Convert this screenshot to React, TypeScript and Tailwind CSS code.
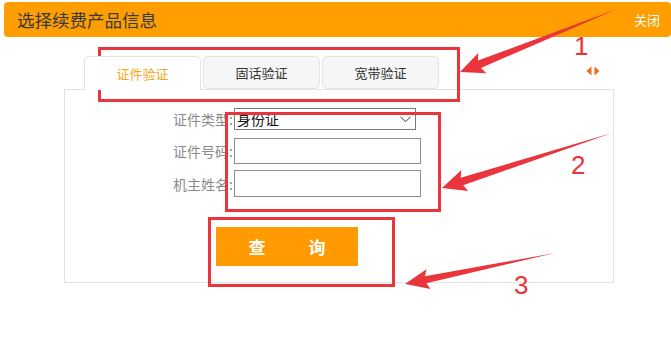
import React from "react";

type Pt = [number, number];

function arrowPoints(t: Pt, p: Pt, headLen: number, headHalf: number, shaftHalf: number): string {
  const dx = p[0] - t[0];
  const dy = p[1] - t[1];
  const L = Math.hypot(dx, dy);
  const ux = dx / L;
  const uy = dy / L;
  const nx = -uy;
  const ny = ux;
  const bx = p[0] - ux * headLen;
  const by = p[1] - uy * headLen;
  const pts: Pt[] = [
    t,
    [bx + nx * shaftHalf, by + ny * shaftHalf],
    [bx - ux * 3 + nx * headHalf, by - uy * 3 + ny * headHalf],
    p,
    [bx - ux * 3 - nx * headHalf, by - uy * 3 - ny * headHalf],
    [bx - nx * shaftHalf, by - ny * shaftHalf],
  ];
  return pts.map((q) => `${q[0].toFixed(1)},${q[1].toFixed(1)}`).join(" ");
}

const font = { fontFamily: '"Noto Sans CJK SC", "Noto Sans", sans-serif' };

export default function App() {
  const red = "#e9353b";
  return (
    <div className="relative w-[671px] h-[338px] overflow-hidden bg-white" style={font}>
      {/* header */}
      <div className="mt-[2px] ml-[4px] h-[35px] bg-[#ff9e00] rounded-[4px] flex items-center justify-between pl-[13px] pr-[11px]">
        <span className="text-[17.5px] text-[#3a3a3a] leading-none">选择续费产品信息</span>
        <span className="text-[13px] text-white leading-none">关闭</span>
      </div>

      {/* tabs row */}
      <div className="mt-[19px] ml-[84px] w-[530px] flex items-start">
        <div className="relative z-10 w-[117px] h-[34px] bg-white border border-b-0 border-[#e3e3e3] rounded-t-[5px] flex items-center justify-center text-[13px] text-[#f5a623]">
          证件验证
        </div>
        <div className="ml-[2px] w-[117px] h-[33px] bg-[#f6f6f6] border border-[#e3e3e3] rounded-[5px] flex items-center justify-center text-[13px] text-[#333]">
          固话验证
        </div>
        <div className="ml-[2px] w-[117px] h-[33px] bg-[#f6f6f6] border border-[#e3e3e3] rounded-[5px] flex items-center justify-center text-[13px] text-[#333]">
          宽带验证
        </div>
        <div className="ml-auto mr-[14px] mt-[10px]">
          <svg width="14" height="10" viewBox="0 0 14 10">
            <polygon points="5.5,0.5 0.5,5 5.5,9.5" fill="#ee6a1e" />
            <polygon points="8.5,0.5 13.5,5 8.5,9.5" fill="#ee6a1e" />
          </svg>
        </div>
      </div>

      {/* panel */}
      <div className="-mt-px ml-[64px] w-[550px] h-[194px] border border-[#e3e3e3] pt-[18px]">
        <div className="flex items-center h-[22px]">
          <span className="w-[169px] pr-[1px] text-right text-[14px] text-[#8a8a8a] leading-none">证件类型:</span>
          <div className="w-[182px] h-[22px] border border-[#7a7a7a] bg-white flex items-center justify-between pl-[2px] pr-[4px]">
            <span className="text-[14px] text-[#111] leading-none">身份证</span>
            <svg width="11" height="7" viewBox="0 0 11 7">
              <polyline points="0.5,0.8 5.5,5.8 10.5,0.8" fill="none" stroke="#333" strokeWidth="1" />
            </svg>
          </div>
        </div>
        <div className="mt-[8px] flex items-center h-[26px]">
          <span className="w-[169px] pr-[1px] text-right text-[14px] text-[#8a8a8a] leading-none">证件号码:</span>
          <div className="w-[187px] h-[26px] border border-[#8c8c8c] bg-white" />
        </div>
        <div className="mt-[6px] flex items-center h-[27px]">
          <span className="w-[169px] pr-[1px] text-right text-[14px] text-[#8a8a8a] leading-none">机主姓名:</span>
          <div className="w-[187px] h-[27px] border border-[#8c8c8c] bg-white" />
        </div>
        <div className="mt-[30px] ml-[151px] w-[142px] h-[39px] bg-[#ff9a00] flex items-center justify-center gap-[43px] text-white text-[17px] font-bold leading-none">
          <span>查</span>
          <span>询</span>
        </div>
      </div>

      {/* annotation boxes */}
      <div className="absolute left-[98px] top-[47px] w-[362px] h-[55px] border-[3px] border-[#e9353b]" />
      <div className="absolute left-[225px] top-[112px] w-[216px] h-[100px] border-[3px] border-[#e9353b]" />
      <div className="absolute left-[208px] top-[217px] w-[187px] h-[70px] border-[3px] border-[#e9353b]" />

      {/* annotation arrows */}
      <svg className="absolute left-0 top-0 pointer-events-none" width="671" height="338" viewBox="0 0 671 338">
        <polygon points={arrowPoints([617, 9], [460, 72], 21, 11, 4)} fill={red} />
        <polygon points={arrowPoints([612, 133], [442, 188], 21, 11, 4)} fill={red} />
        <polygon points={arrowPoints([555, 253], [405, 284], 21, 10, 3.5)} fill={red} />
      </svg>

      {/* numbers */}
      <span className="absolute left-[574px] top-[33px] text-[26px] leading-none text-[#e9353b]" style={{ fontFamily: '"Liberation Sans", sans-serif' }}>1</span>
      <span className="absolute left-[571px] top-[152px] text-[26px] leading-none text-[#e9353b]" style={{ fontFamily: '"Liberation Sans", sans-serif' }}>2</span>
      <span className="absolute left-[514px] top-[272px] text-[26px] leading-none text-[#e9353b]" style={{ fontFamily: '"Liberation Sans", sans-serif' }}>3</span>
    </div>
  );
}
